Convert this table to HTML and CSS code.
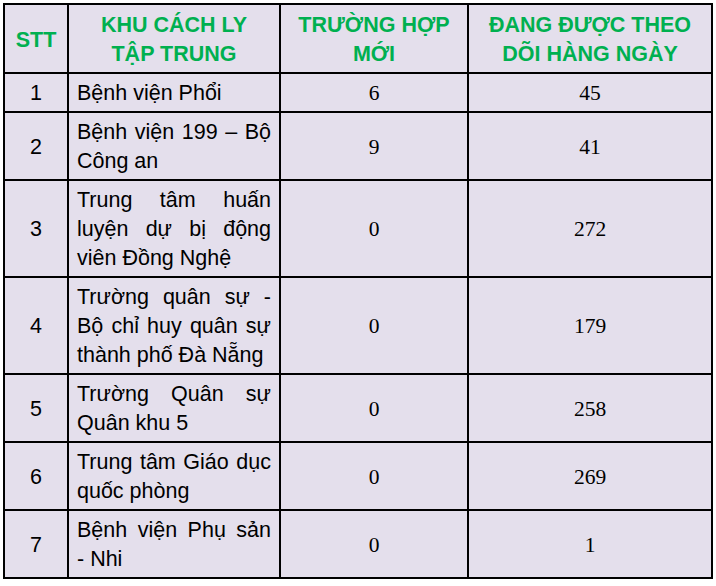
FILE: index.html
```html
<!DOCTYPE html>
<html lang="vi">
<head>
<meta charset="utf-8">
<link rel="stylesheet" href="styles.css">
</head>
<body>
<table class="tbl">
  <colgroup>
    <col class="c1"><col class="c2"><col class="c3"><col class="c4">
  </colgroup>
  <thead>
    <tr>
      <th>STT</th>
      <th>KHU CÁCH LY<br>TẬP TRUNG</th>
      <th>TRƯỜNG HỢP<br>MỚI</th>
      <th>ĐANG ĐƯỢC THEO<br>DÕI HÀNG NGÀY</th>
    </tr>
  </thead>
  <tbody>
    <tr><td class="stt">1</td><td class="name">Bệnh viện Phổi</td><td class="num">6</td><td class="num">45</td></tr>
    <tr><td class="stt">2</td><td class="name">Bệnh viện 199 – Bộ Công an</td><td class="num">9</td><td class="num">41</td></tr>
    <tr><td class="stt">3</td><td class="name">Trung tâm huấn luyện dự bị động viên Đồng Nghệ</td><td class="num">0</td><td class="num">272</td></tr>
    <tr><td class="stt">4</td><td class="name">Trường quân sự - Bộ chỉ huy quân sự thành phố Đà Nẵng</td><td class="num">0</td><td class="num">179</td></tr>
    <tr><td class="stt">5</td><td class="name">Trường Quân sự Quân khu 5</td><td class="num">0</td><td class="num">258</td></tr>
    <tr><td class="stt">6</td><td class="name">Trung tâm Giáo dục quốc phòng</td><td class="num">0</td><td class="num">269</td></tr>
    <tr><td class="stt">7</td><td class="name">Bệnh viện Phụ sản <span class="nowrap">- Nhi</span></td><td class="num">0</td><td class="num">1</td></tr>
  </tbody>
</table>
</body>
</html>
```
FILE: styles.css
```css
html, body {
  margin: 0;
  padding: 0;
  background: #ffffff;
}
body {
  padding: 3px 0 0 3px;
}
.tbl {
  border-collapse: collapse;
  table-layout: fixed;
  width: 708px;
  background: #e4dfec;
  font-family: "Liberation Sans", Arial, sans-serif;
  font-size: 21.5px;
  line-height: 29px;
  color: #000;
}
.c1 { width: 64px; }
.c2 { width: 212px; }
.c3 { width: 188px; }
.c4 { width: 244px; }
.tbl th, .tbl td {
  border: 2px solid #000;
  padding: 5.5px 8px 2.5px;
  vertical-align: middle;
}
.tbl th {
  color: #00b050;
  font-weight: bold;
  text-align: center;
  padding-top: 6px;
}
.stt {
  text-align: center;
}
.name {
  text-align: justify;
}
.nowrap {
  white-space: nowrap;
}
.num {
  text-align: center;
  font-family: "Liberation Serif", "Times New Roman", serif;
}
```
